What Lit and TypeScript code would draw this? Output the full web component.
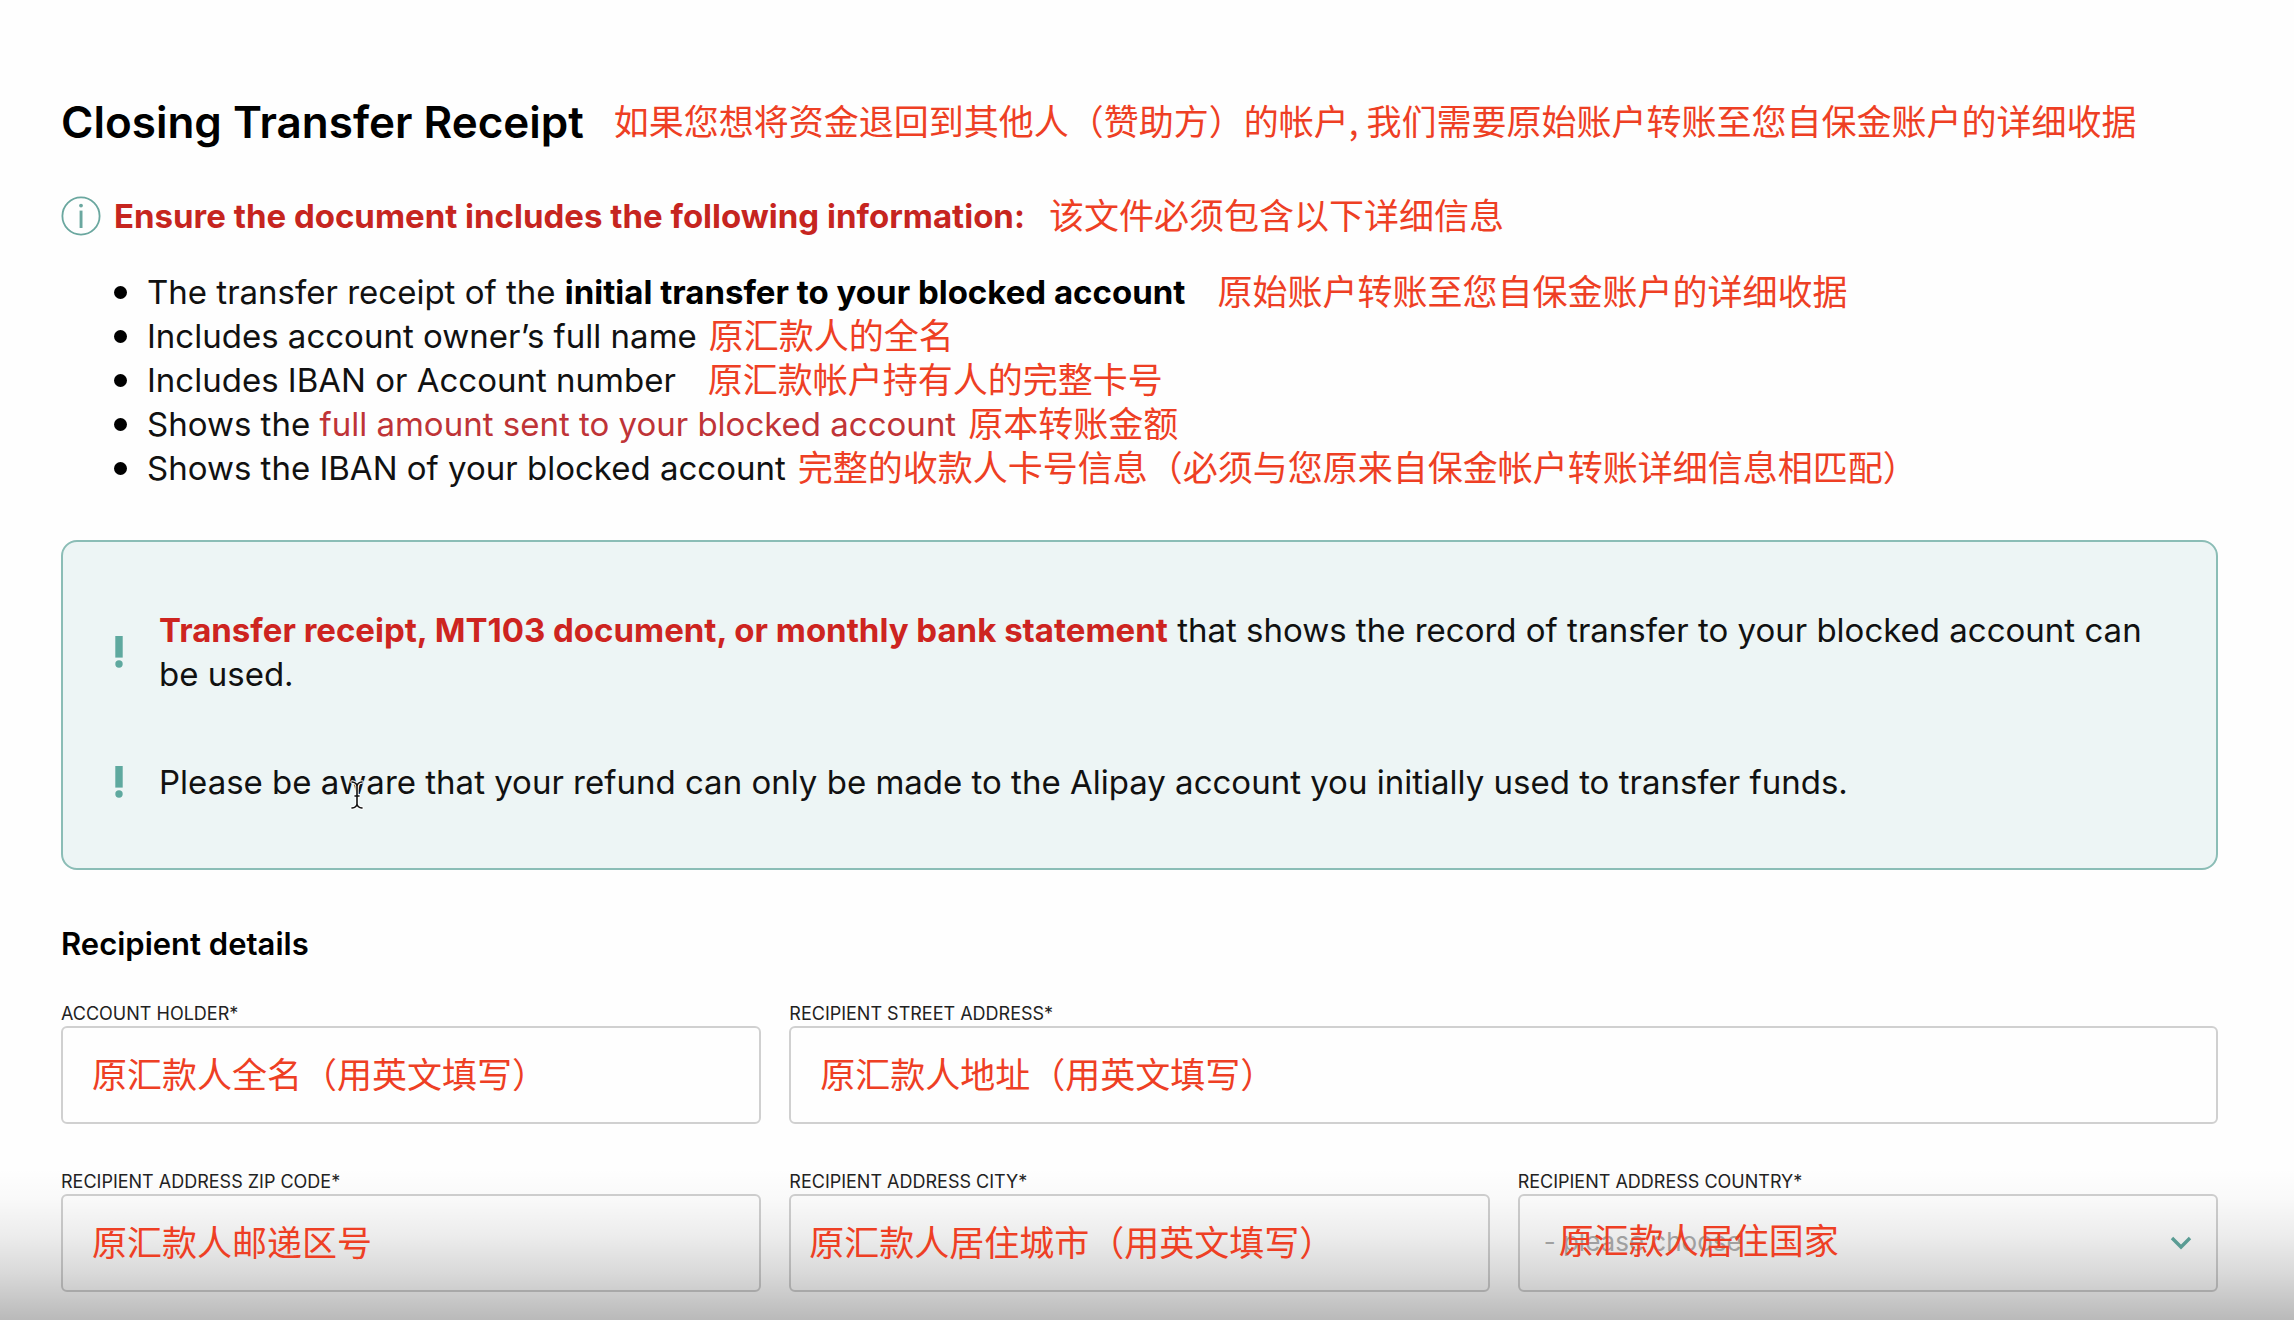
import { LitElement, html, css, svg } from "lit";
import { customElement } from "lit/decorators.js";

const infoIcon = html`<svg class="info-icon" viewBox="0 0 40 40" aria-hidden="true">
  <circle cx="20" cy="20" r="18.6" fill="none" stroke="#6aa79f" stroke-width="1.8" />
  <circle cx="20" cy="9.6" r="1.9" fill="#6aa79f" />
  <rect x="18.6" y="14.6" width="2.9" height="17.4" fill="#6aa79f" />
</svg>`;

const bangIcon = html`<svg class="bang-icon" viewBox="0 0 8 32" aria-hidden="true">
  <rect x="0.3" y="0" width="7.4" height="21.6" fill="#5fa99f" />
  <circle cx="4" cy="28" r="3.7" fill="#5fa99f" />
</svg>`;

const beam = svg`<g fill="none" stroke-linecap="round">
  <path d="M2 2 Q6.5 2.4 7 6 Q7.5 2.4 12 2 M7 6 V24 M2 28 Q6.5 27.6 7 24 Q7.5 27.6 12 28 M5 16 H9" stroke="#fff" stroke-width="3.4" />
  <path d="M2 2 Q6.5 2.4 7 6 Q7.5 2.4 12 2 M7 6 V24 M2 28 Q6.5 27.6 7 24 Q7.5 27.6 12 28 M5 16 H9" stroke="#111" stroke-width="1.6" />
</g>`;

@customElement("app-root")
export class AppRoot extends LitElement {
  static styles = css`
    :host {
      display: block;
      box-sizing: border-box;
      min-height: 100vh;
      padding: 92px 76px 24px 61px;
      color: #111;
      background: #fefefe
        linear-gradient(
          to bottom,
          rgba(0, 0, 0, 0) 0%,
          rgba(0, 0, 0, 0.02) 20%,
          rgba(0, 0, 0, 0.07) 45%,
          rgba(0, 0, 0, 0.15) 70%,
          rgba(0, 0, 0, 0.27) 100%
        )
        bottom / 100% 152px no-repeat;
      font-family: Inter, "Noto Sans CJK SC", sans-serif;
      font-size: 33px;
      line-height: 44px;
    }
    h1,
    h2,
    h3,
    p,
    ul {
      margin: 0;
      padding: 0;
    }
    .row {
      display: flex;
      align-items: center;
    }
    .title-row {
      gap: 30px;
    }
    .title {
      font-size: 44px;
      line-height: 60px;
      font-weight: 600;
      color: #000;
      white-space: nowrap;
    }
    .note {
      padding-bottom: 4px;
      font-family: "Noto Sans CJK SC", sans-serif;
      font-size: 35px;
      font-weight: 400;
      color: #ee3f24;
      white-space: nowrap;
    }
    .info-row {
      margin-top: 40px;
      gap: 24px;
    }
    .info-lead {
      gap: 13px;
    }
    .info-icon {
      width: 40px;
      height: 40px;
      flex: none;
    }
    .info-title {
      font-size: 33px;
      font-weight: 700;
      color: #c6251f;
      white-space: nowrap;
    }
    .list {
      margin-top: 30px;
      padding-left: 53px;
      list-style: none;
    }
    .list .row {
      height: 44px;
      gap: 12px;
    }
    .list .roomy {
      gap: 32px;
    }
    .item {
      display: flex;
      align-items: center;
      gap: 20px;
      white-space: nowrap;
    }
    .item::before {
      content: "";
      width: 13px;
      height: 13px;
      border-radius: 50%;
      background: #000;
      flex: none;
    }
    .strong {
      font-weight: 700;
      color: #000;
    }
    .red {
      color: #bf3437;
    }
    .alert {
      color: #cd2420;
      font-weight: 700;
    }
    .notice {
      margin-top: 50px;
      padding: 66px 64px 64px 52px;
      border: 2px solid #8bbdb6;
      border-radius: 16px;
      background: #edf5f5;
      display: flex;
      flex-direction: column;
      gap: 64px;
    }
    .notice .row {
      gap: 36px;
      position: relative;
    }
    .bang-icon {
      width: 8px;
      height: 32px;
      flex: none;
    }
    .beam {
      position: absolute;
      left: 235px;
      top: 20px;
      width: 14px;
      height: 30px;
    }
    .section {
      margin-top: 52px;
      font-size: 31px;
      font-weight: 600;
      color: #000;
    }
    .form {
      margin-top: 36px;
      display: grid;
      grid-template-columns: repeat(3, 1fr);
      gap: 46px 28px;
    }
    .field {
      display: flex;
      flex-direction: column;
      position: relative;
    }
    .wide {
      grid-column: span 2;
    }
    .label {
      font-size: 18px;
      line-height: 24px;
      color: #222;
    }
    .control {
      box-sizing: border-box;
      width: 100%;
      height: 98px;
      margin: 0;
      padding: 0 29px 6px;
      border: 2px solid rgba(0, 0, 0, 0.18);
      border-radius: 6px;
      background: transparent;
      outline: none;
    }
    .near {
      padding: 0 18px 6px;
    }
    .select {
      appearance: none;
      padding: 0 24px 4px;
      font: 26px Inter, sans-serif;
      color: #a0a0a0;
      opacity: 1;
    }
    .over {
      position: absolute;
      left: 41px;
      bottom: 27px;
      pointer-events: none;
    }
    .chevron {
      position: absolute;
      right: 26px;
      bottom: 42px;
      width: 22px;
      height: 14px;
      pointer-events: none;
    }
  `;

  render() {
    return html`
      <header class="row title-row">
        <h1 class="title">Closing Transfer Receipt</h1>
        <span class="note">如果您想将资金退回到其他人（赞助方）的帐户, 我们需要原始账户转账至您自保金账户的详细收据</span>
      </header>

      <div class="row info-row">
        <div class="row info-lead">
          ${infoIcon}
          <h2 class="info-title">Ensure the document includes the following information:</h2>
        </div>
        <span class="note">该文件必须包含以下详细信息</span>
      </div>

      <ul class="list">
        <li class="row roomy">
          <div class="item"><span>The transfer receipt of the <b class="strong">initial transfer to your blocked account</b></span></div>
          <span class="note">原始账户转账至您自保金账户的详细收据</span>
        </li>
        <li class="row">
          <div class="item"><span>Includes account owner’s full name</span></div>
          <span class="note">原汇款人的全名</span>
        </li>
        <li class="row roomy">
          <div class="item"><span>Includes IBAN or Account number</span></div>
          <span class="note">原汇款帐户持有人的完整卡号</span>
        </li>
        <li class="row">
          <div class="item"><span>Shows the <span class="red">full amount sent to your blocked account</span></span></div>
          <span class="note">原本转账金额</span>
        </li>
        <li class="row">
          <div class="item"><span>Shows the IBAN of your blocked account</span></div>
          <span class="note">完整的收款人卡号信息（必须与您原来自保金帐户转账详细信息相匹配）</span>
        </li>
      </ul>

      <section class="notice">
        <div class="row">
          ${bangIcon}
          <p><b class="alert">Transfer receipt, MT103 document, or monthly bank statement</b> that shows the record of transfer to your blocked account can be used.</p>
        </div>
        <div class="row">
          ${bangIcon}
          <p>Please be aware that your refund can only be made to the Alipay account you initially used to transfer funds.</p>
          <svg class="beam" viewBox="0 0 14 30" aria-hidden="true">${beam}</svg>
        </div>
      </section>

      <h3 class="section">Recipient details</h3>

      <form class="form">
        <div class="field">
          <label class="label" for="holder">ACCOUNT HOLDER*</label>
          <input class="control note" id="holder" type="text" value="原汇款人全名（用英文填写）" />
        </div>
        <div class="field wide">
          <label class="label" for="street">RECIPIENT STREET ADDRESS*</label>
          <input class="control note" id="street" type="text" value="原汇款人地址（用英文填写）" />
        </div>
        <div class="field">
          <label class="label" for="zip">RECIPIENT ADDRESS ZIP CODE*</label>
          <input class="control note" id="zip" type="text" value="原汇款人邮递区号" />
        </div>
        <div class="field">
          <label class="label" for="city">RECIPIENT ADDRESS CITY*</label>
          <input class="control note near" id="city" type="text" value="原汇款人居住城市（用英文填写）" />
        </div>
        <div class="field">
          <label class="label" for="country">RECIPIENT ADDRESS COUNTRY*</label>
          <select class="control select" id="country">
            <option>- please choose -</option>
          </select>
          <span class="note over">原汇款人居住国家</span>
          <svg class="chevron" viewBox="0 0 22 14" aria-hidden="true">
            <path d="M2 2 L11 11 L20 2" fill="none" stroke="#5a9c94" stroke-width="3.4" />
          </svg>
        </div>
      </form>
    `;
  }
}
